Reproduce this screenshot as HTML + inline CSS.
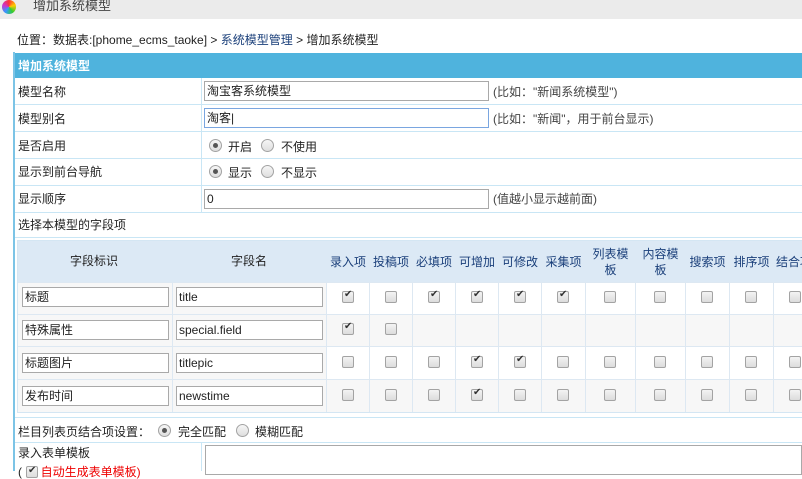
<!DOCTYPE html><html><head><meta charset="utf-8"><style>
*{box-sizing:border-box;margin:0;padding:0}
body{width:802px;height:471px;overflow:hidden;background:#fff;font:12px "Liberation Sans","Noto Sans CJK SC",sans-serif;color:#222;position:relative}
.a{position:absolute}
.t{position:absolute;white-space:nowrap;line-height:14px}
.hl{position:absolute;height:1px;background:#c9e6f5}
.vl{position:absolute;width:1px;background:#c9e6f5}
.in{position:absolute;border:1px solid #a9a9a9;background:#fff;height:20px;line-height:18px;padding-left:2px;font-size:12px}
.cb{position:absolute;width:12px;height:12px;border:1px solid #a3a3a3;border-radius:2px;background:linear-gradient(#f3f3f3,#dcdcdc)}
.cb.c::after{content:"✔";position:absolute;left:1px;top:-3px;font-size:10px;color:#333}
.rd{position:absolute;width:13px;height:13px;border:1px solid #a3a3a3;border-radius:50%;background:linear-gradient(#f6f6f6,#dedede)}
.rd.c::after{content:"";position:absolute;left:3px;top:3px;width:5px;height:5px;border-radius:50%;background:#555}
.hc{position:absolute;color:#1a3f7a;text-align:center;line-height:16px}
</style></head><body>
<div class="a" style="left:0;top:0;width:802px;height:19px;background:#ebebeb"></div>
<div class="a" style="left:2px;top:0;width:14px;height:14px;border-radius:50%;background:conic-gradient(#f33,#fc0,#3c3,#39f,#c3c,#f33)"></div>
<div class="t" style="left:33px;top:-1px;color:#444;font-size:13px">增加系统模型</div>
<div class="t" style="left:17px;top:33px">位置：数据表:[phome_ecms_taoke] &gt; <span style="color:#1a3f7a">系统模型管理</span> &gt; 增加系统模型</div>
<div class="vl" style="left:13px;top:52px;height:419px;background:#7cc4e6;width:2px"></div>
<div class="a" style="left:15px;top:53px;width:787px;height:25px;background:#4fb3dd"></div>
<div class="t" style="left:18px;top:59px;color:#fff;font-weight:bold">增加系统模型</div>
<div class="vl" style="left:201px;top:78px;height:135px"></div>
<div class="hl" style="left:15px;top:104px;width:787px"></div>
<div class="hl" style="left:15px;top:131px;width:787px"></div>
<div class="hl" style="left:15px;top:158px;width:787px"></div>
<div class="hl" style="left:15px;top:185px;width:787px"></div>
<div class="hl" style="left:15px;top:212px;width:787px"></div>
<div class="hl" style="left:15px;top:237px;width:787px"></div>
<div class="t" style="left:18px;top:85px">模型名称</div>
<div class="in" style="left:204px;top:81px;width:285px">淘宝客系统模型</div>
<div class="t" style="left:493px;top:85px;color:#444">(比如："新闻系统模型")</div>
<div class="t" style="left:18px;top:112px">模型别名</div>
<div class="in" style="left:204px;top:108px;width:285px;border-color:#7aa6e0">淘客|</div>
<div class="t" style="left:493px;top:112px;color:#444">(比如："新闻"，用于前台显示)</div>
<div class="t" style="left:18px;top:139px">是否启用</div>
<div class="rd c" style="left:209px;top:139px"></div><div class="t" style="left:228px;top:140px">开启</div>
<div class="rd" style="left:261px;top:139px"></div><div class="t" style="left:281px;top:140px">不使用</div>
<div class="t" style="left:18px;top:165px">显示到前台导航</div>
<div class="rd c" style="left:209px;top:165px"></div><div class="t" style="left:228px;top:166px">显示</div>
<div class="rd" style="left:261px;top:165px"></div><div class="t" style="left:281px;top:166px">不显示</div>
<div class="t" style="left:18px;top:192px">显示顺序</div>
<div class="in" style="left:204px;top:189px;width:285px">0</div>
<div class="t" style="left:493px;top:192px;color:#444">(值越小显示越前面)</div>
<div class="t" style="left:18px;top:218px">选择本模型的字段项</div>
<div class="a" style="left:17px;top:240px;width:785px;height:173px;border:1px solid #d4e6f3;border-right:none"></div>
<div class="a" style="left:18px;top:241px;width:784px;height:41px;background:#dce9f5"></div>
<div class="a" style="left:18px;top:314px;width:784px;height:33px;background:#f7f7f7"></div>
<div class="a" style="left:18px;top:379px;width:784px;height:33px;background:#f7f7f7"></div>
<div class="a" style="left:18px;top:282px;width:309px;height:130px;background:#f7f7f7"></div>
<div class="hl" style="left:18px;top:282px;width:784px;background:#dde8f2"></div>
<div class="hl" style="left:18px;top:314px;width:784px;background:#dde8f2"></div>
<div class="hl" style="left:18px;top:346px;width:784px;background:#dde8f2"></div>
<div class="hl" style="left:18px;top:379px;width:784px;background:#dde8f2"></div>
<div class="vl" style="left:172px;top:282px;height:130px;background:#dde8f2"></div>
<div class="vl" style="left:326px;top:282px;height:130px;background:#dde8f2"></div>
<div class="vl" style="left:369px;top:282px;height:130px;background:#dde8f2"></div>
<div class="vl" style="left:412px;top:282px;height:130px;background:#dde8f2"></div>
<div class="vl" style="left:455px;top:282px;height:130px;background:#dde8f2"></div>
<div class="vl" style="left:498px;top:282px;height:130px;background:#dde8f2"></div>
<div class="vl" style="left:541px;top:282px;height:130px;background:#dde8f2"></div>
<div class="vl" style="left:585px;top:282px;height:130px;background:#dde8f2"></div>
<div class="vl" style="left:635px;top:282px;height:130px;background:#dde8f2"></div>
<div class="vl" style="left:685px;top:282px;height:130px;background:#dde8f2"></div>
<div class="vl" style="left:729px;top:282px;height:130px;background:#dde8f2"></div>
<div class="vl" style="left:773px;top:282px;height:130px;background:#dde8f2"></div>
<div class="t" style="left:70px;top:254px">字段标识</div>
<div class="t" style="left:231px;top:254px">字段名</div>
<div class="hc" style="left:327px;top:254px;width:42px">录入项</div>
<div class="hc" style="left:370px;top:254px;width:42px">投稿项</div>
<div class="hc" style="left:413px;top:254px;width:42px">必填项</div>
<div class="hc" style="left:456px;top:254px;width:42px">可增加</div>
<div class="hc" style="left:499px;top:254px;width:42px">可修改</div>
<div class="hc" style="left:542px;top:254px;width:43px">采集项</div>
<div class="hc" style="left:586px;top:246px;width:49px">列表模<br>板</div>
<div class="hc" style="left:636px;top:246px;width:49px">内容模<br>板</div>
<div class="hc" style="left:686px;top:254px;width:43px">搜索项</div>
<div class="hc" style="left:730px;top:254px;width:43px">排序项</div>
<div class="t" style="left:776px;top:255px;color:#1a3f7a">结合项</div>
<div class="in" style="left:22px;top:287px;width:147px">标题</div><div class="in" style="left:176px;top:287px;width:147px">title</div>
<div class="in" style="left:22px;top:320px;width:147px">特殊属性</div><div class="in" style="left:176px;top:320px;width:147px">special.field</div>
<div class="in" style="left:22px;top:353px;width:147px">标题图片</div><div class="in" style="left:176px;top:353px;width:147px">titlepic</div>
<div class="in" style="left:22px;top:386px;width:147px">发布时间</div><div class="in" style="left:176px;top:386px;width:147px">newstime</div>
<div class="cb c" style="left:342px;top:291px"></div><div class="cb" style="left:385px;top:291px"></div><div class="cb c" style="left:428px;top:291px"></div><div class="cb c" style="left:471px;top:291px"></div><div class="cb c" style="left:514px;top:291px"></div><div class="cb c" style="left:557px;top:291px"></div><div class="cb" style="left:604px;top:291px"></div><div class="cb" style="left:654px;top:291px"></div><div class="cb" style="left:701px;top:291px"></div><div class="cb" style="left:745px;top:291px"></div><div class="cb" style="left:789px;top:291px"></div>
<div class="cb c" style="left:342px;top:323px"></div><div class="cb" style="left:385px;top:323px"></div>
<div class="cb" style="left:342px;top:356px"></div><div class="cb" style="left:385px;top:356px"></div><div class="cb" style="left:428px;top:356px"></div><div class="cb c" style="left:471px;top:356px"></div><div class="cb c" style="left:514px;top:356px"></div><div class="cb" style="left:557px;top:356px"></div><div class="cb" style="left:604px;top:356px"></div><div class="cb" style="left:654px;top:356px"></div><div class="cb" style="left:701px;top:356px"></div><div class="cb" style="left:745px;top:356px"></div><div class="cb" style="left:789px;top:356px"></div>
<div class="cb" style="left:342px;top:389px"></div><div class="cb" style="left:385px;top:389px"></div><div class="cb" style="left:428px;top:389px"></div><div class="cb c" style="left:471px;top:389px"></div><div class="cb" style="left:514px;top:389px"></div><div class="cb" style="left:557px;top:389px"></div><div class="cb" style="left:604px;top:389px"></div><div class="cb" style="left:654px;top:389px"></div><div class="cb" style="left:701px;top:389px"></div><div class="cb" style="left:745px;top:389px"></div><div class="cb" style="left:789px;top:389px"></div>
<div class="hl" style="left:15px;top:417px;width:787px"></div>
<div class="t" style="left:18px;top:425px">栏目列表页结合项设置：</div>
<div class="rd c" style="left:158px;top:424px"></div><div class="t" style="left:178px;top:425px">完全匹配</div>
<div class="rd" style="left:236px;top:424px"></div><div class="t" style="left:255px;top:425px">模糊匹配</div>
<div class="hl" style="left:15px;top:442px;width:787px"></div>
<div class="vl" style="left:201px;top:443px;height:28px"></div>
<div class="t" style="left:18px;top:446px">录入表单模板</div>
<div class="t" style="left:18px;top:464px">(<span class="cb c" style="position:relative;display:inline-block;top:2px;left:4px"></span> <span style="color:#e00">&nbsp;自动生成表单模板)</span></div>
<div class="a" style="left:205px;top:445px;width:597px;height:30px;border:1px solid #a9a9a9"></div>
</body></html>
